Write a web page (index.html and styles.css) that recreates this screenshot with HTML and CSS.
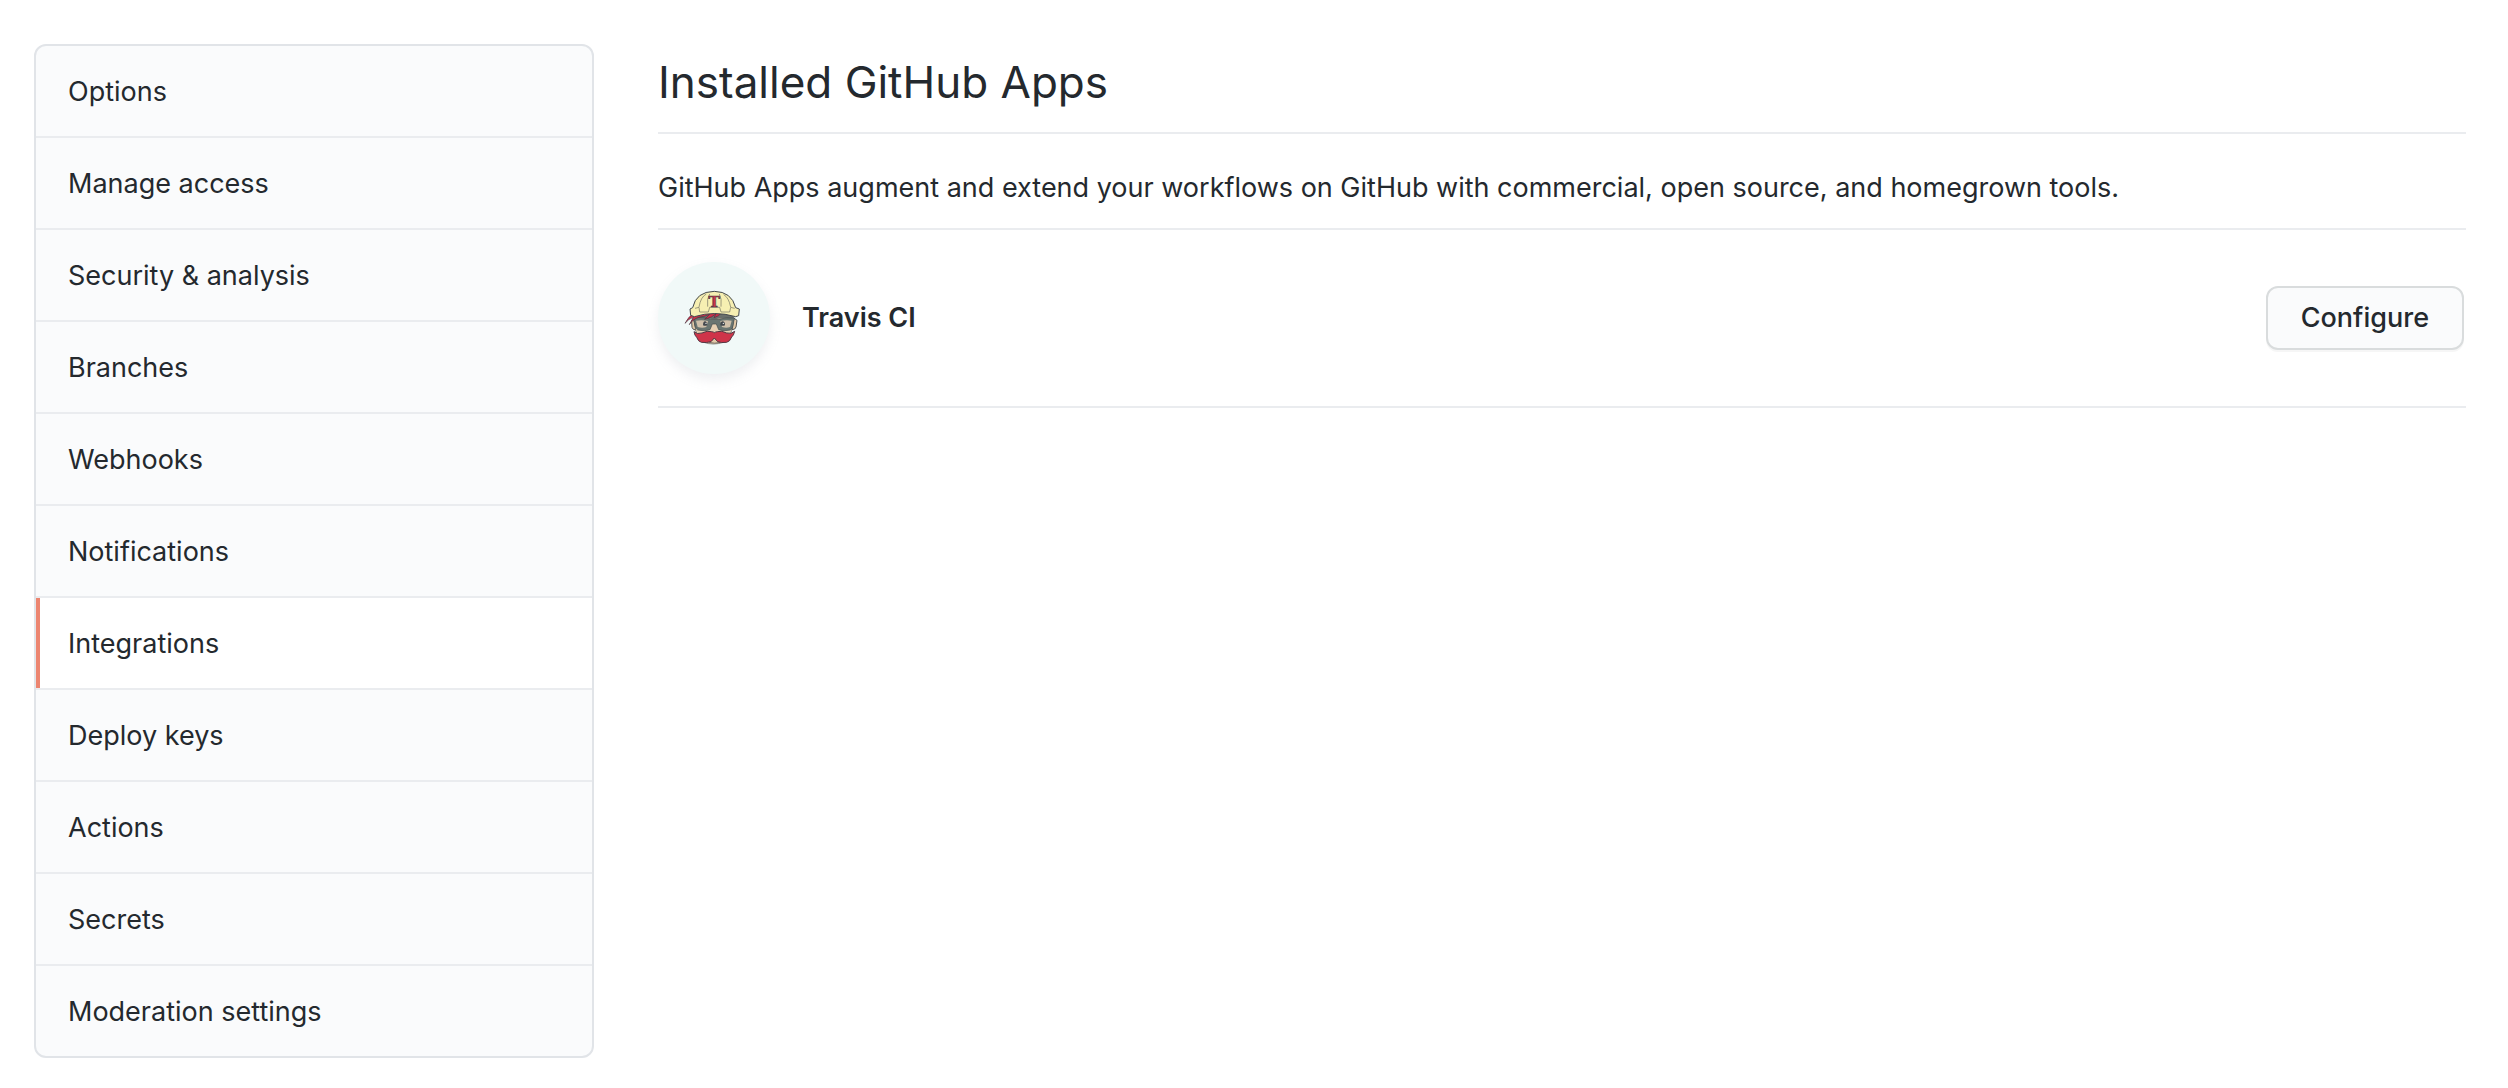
FILE: index.html
```html
<!DOCTYPE html>
<html lang="en">
<head>
<meta charset="utf-8">
<meta name="viewport" content="width=device-width, initial-scale=1">
<title>Installed GitHub Apps</title>
<link rel="stylesheet" href="styles.css">
</head>
<body>
<div class="layout">
  <nav class="menu" aria-label="Repository settings">
    <a class="menu-item" href="#options">Options</a>
    <a class="menu-item" href="#access">Manage access</a>
    <a class="menu-item" href="#security">Security &amp; analysis</a>
    <a class="menu-item" href="#branches">Branches</a>
    <a class="menu-item" href="#webhooks">Webhooks</a>
    <a class="menu-item" href="#notifications">Notifications</a>
    <a class="menu-item selected" href="#integrations" aria-current="page">Integrations</a>
    <a class="menu-item" href="#keys">Deploy keys</a>
    <a class="menu-item" href="#actions">Actions</a>
    <a class="menu-item" href="#secrets">Secrets</a>
    <a class="menu-item" href="#moderation">Moderation settings</a>
  </nav>
  <main class="content">
    <h1 class="heading">Installed GitHub Apps</h1>
    <p class="intro">GitHub Apps augment and extend your workflows on GitHub with commercial, open source, and homegrown tools.</p>
    <div class="app">
      <span class="app-logo">
        <svg class="app-face" viewBox="6 3 192 192" aria-hidden="true">
          <!-- ears and face -->
          <path d="M40 100l-5 8 1 19q2 8 12 8zM160 98l11 8-3 20q-2 8-12 8z" fill="#e3caa9" stroke="#4f5252" stroke-width="3"/>
          <path d="M42 92h118l-5 44q-4 22-24 36-32 10-60 0-19-14-24-36z" fill="#e6d0b2" stroke="#5b5a58" stroke-width="2"/>
          <!-- hair -->
          <path d="M48 84h114l-4 18q-28-5-54 1-32-5-60 0z" fill="#696f6c"/>
          <!-- glasses -->
          <path d="M40 99q32-4 52 4h24q23-7 48-4l-3 11q-1 20-10 25-20 5-35-1l-7-17h-12l-7 17q-16 6-37 1-8-5-9-23z" fill="#697571" stroke="#424b4d" stroke-width="2"/>
          <path d="M48 107q18-3 36 1l-5 18q-12 4-26 0zM121 108q18-4 34-1l-5 19q-11 4-24 0z" fill="#cfc0aa"/>
          <path d="M69 121q0-12 6-12t7 12q-7 3-13 0zM121 121q0-12 7-12t7 12q-7 3-14 0z" fill="#43484d"/>
          <circle cx="78" cy="115" r="2" fill="#fff"/><circle cx="130" cy="115" r="2" fill="#fff"/>
          <path d="M43 84q-17 9-28 31 11-14 25-18l-12 22q9-16 31-23 16-1 30-8l-15 15q24-6 34-17l-6 12q15-4 22-14z" fill="#cf2f49" stroke="#4d3440" stroke-width="2"/>
          <!-- chin -->
          <path d="M88 172l15-14 17 14q-16 5-32 0z" fill="#e3caa9" stroke="#54514f" stroke-width="2"/>
          <!-- moustache -->
          <path d="M42 140q9 9 24 4 16-8 29-4 6 1 8 3 3-2 9-3 13-4 28 4 15 4 24-5-3 13-9 17-5 14-15 16-16 2-27-2l-10-11-10 11q-14 4-29 2-9-2-14-15-6-5-8-17z" fill="#cf3449" stroke="#533844" stroke-width="3"/>
          <!-- helmet -->
          <path d="M38 68Q48 20 103 19q52 1 64 49l11 4-2 20-9 3q-64-19-124 0l-11-4-2-19z" fill="#f6efb2" stroke="#42484f" stroke-width="3"/>
          <path d="M45 70l12-3 2 14h26l4-14h30l4 14h26l3-14 12 3M57 66q5-30 22-39M152 66q-6-29-21-37M83 65q-3-25 6-38M123 65q3-25-5-38" fill="none" stroke="#6f6f61" stroke-width="2"/>
          <text class="helmet-letter" x="103" y="66" text-anchor="middle">T</text>
        </svg>
      </span>
      <strong class="app-name">Travis CI</strong>
      <button class="button" type="button">Configure</button>
    </div>
  </main>
</div>
</body>
</html>
```
FILE: styles.css
```css
* {
  box-sizing: border-box;
}

body {
  margin: 0;
  background: #fff;
  color: #24292e;
  font-family: Inter, "Liberation Sans", sans-serif;
  font-size: 27px;
  line-height: 42px;
}

.layout {
  display: flex;
  align-items: flex-start;
  gap: 64px;
  padding: 44px 42px 30px 34px;
}

.menu {
  flex: 0 0 560px;
  overflow: hidden;
  background: #fafbfc;
  border: 2px solid #e1e4e8;
  border-radius: 12px;
}

.menu-item {
  display: block;
  padding: 25px 32px 23px;
  border-bottom: 2px solid #eaecef;
  color: inherit;
  text-decoration: none;
}

.menu-item:last-child {
  border-bottom: 0;
}

.selected {
  background: #fff;
  box-shadow: inset 4px 0 #ec8570;
}

.content {
  flex: 1;
  min-width: 0;
}

.heading {
  margin: 0;
  padding: 2px 0 14px;
  border-bottom: 2px solid #eaecef;
  font-size: 44px;
  font-weight: 400;
  line-height: 72px;
}

.intro {
  margin: 0;
  padding: 33px 0 19px;
  border-bottom: 2px solid #eaecef;
}

.app {
  display: flex;
  align-items: center;
  gap: 32px;
  padding: 32px 2px 32px 0;
  border-bottom: 2px solid #eaecef;
}

.app-logo {
  display: flex;
  align-items: center;
  justify-content: center;
  width: 112px;
  height: 112px;
  border-radius: 50%;
  background: #f1f9f8;
  box-shadow: 0 6px 12px rgba(149, 157, 165, 0.15);
}

.app-face {
  width: 64px;
  height: 64px;
}

.helmet-letter {
  fill: #cf3449;
  stroke: #463c45;
  stroke-width: 2px;
  font: 700 46px "DejaVu Serif", serif;
}

.app-name {
  flex: 1;
  font-weight: 600;
}

.button {
  padding: 9px 33px;
  background: #fafbfc;
  border: 2px solid #d9dcdd;
  border-radius: 12px;
  box-shadow: 0 2px 0 rgba(27, 31, 35, 0.04);
  color: inherit;
  font: inherit;
  font-weight: 500;
}
```
